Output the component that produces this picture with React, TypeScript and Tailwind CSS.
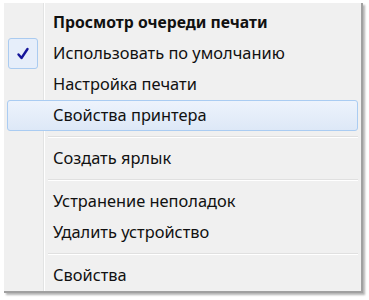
import React from "react";

type Item =
  | { kind: "item"; label: string; bold?: boolean; checked?: boolean; hover?: boolean }
  | { kind: "sep" };

const items: Item[] = [
  { kind: "item", label: "Просмотр очереди печати", bold: true },
  { kind: "item", label: "Использовать по умолчанию", checked: true },
  { kind: "item", label: "Настройка печати" },
  { kind: "item", label: "Свойства принтера", hover: true },
  { kind: "sep" },
  { kind: "item", label: "Создать ярлык" },
  { kind: "sep" },
  { kind: "item", label: "Устранение неполадок" },
  { kind: "item", label: "Удалить устройство" },
  { kind: "sep" },
  { kind: "item", label: "Свойства" },
];

function Check() {
  return (
    <svg width="14" height="14" viewBox="0 0 14 14">
      <path d="M2.5 7.5 L5.5 11 L11.5 2" fill="none" stroke="#15159a" strokeWidth="2.4" strokeLinecap="round" strokeLinejoin="round" />
    </svg>
  );
}

export default function App() {
  return (
    <div className="w-[369px] h-[300px] bg-white pl-[4px] pt-[3px]" style={{ fontFamily: '"Noto Sans", "Open Sans", sans-serif' }}>
      <div className="w-[359px] h-[290px] bg-[#f0f0f0] border-r-2 border-b-2 border-[#a0a0a0] shadow-[2px_2px_2px_rgba(0,0,0,0.3)] p-[3px] pt-[4px] bg-[linear-gradient(to_right,transparent_39px,#e2e3e3_39px,#e2e3e3_40px,#ffffff_40px,#ffffff_41px,transparent_41px)]">
        <div className="flex flex-col">
          {items.map((it, i) =>
            it.kind === "sep" ? (
              <div key={i} className="h-[12px] flex flex-col justify-center pl-[41px]">
                <div className="h-[1px] bg-[#e0e0e0]" />
                <div className="h-[1px] bg-white" />
              </div>
            ) : (
              <div
                key={i}
                className={
                  "h-[31px] flex items-center relative rounded-[3px] " +
                  (it.hover
                    ? "border border-[#aaccf2] bg-[linear-gradient(to_bottom,#edf3fc,#dde8f7)]"
                    : "border border-transparent")
                }
              >
                <div className="w-[31px] h-[31px] -ml-[1px] flex items-center justify-center">
                  {it.checked && (
                    <div className="w-[30px] h-[31px] rounded-[3px] border border-[#aacbf0] bg-[#e6eefa] flex items-center justify-center">
                      <Check />
                    </div>
                  )}
                </div>
                <span
                  className={
                    "ml-[15px] text-[#111] leading-none " + (it.bold ? "font-bold text-[15.75px]" : "font-normal text-[16.4px]")
                  }
                >
                  {it.label}
                </span>
              </div>
            )
          )}
        </div>
      </div>
    </div>
  );
}
